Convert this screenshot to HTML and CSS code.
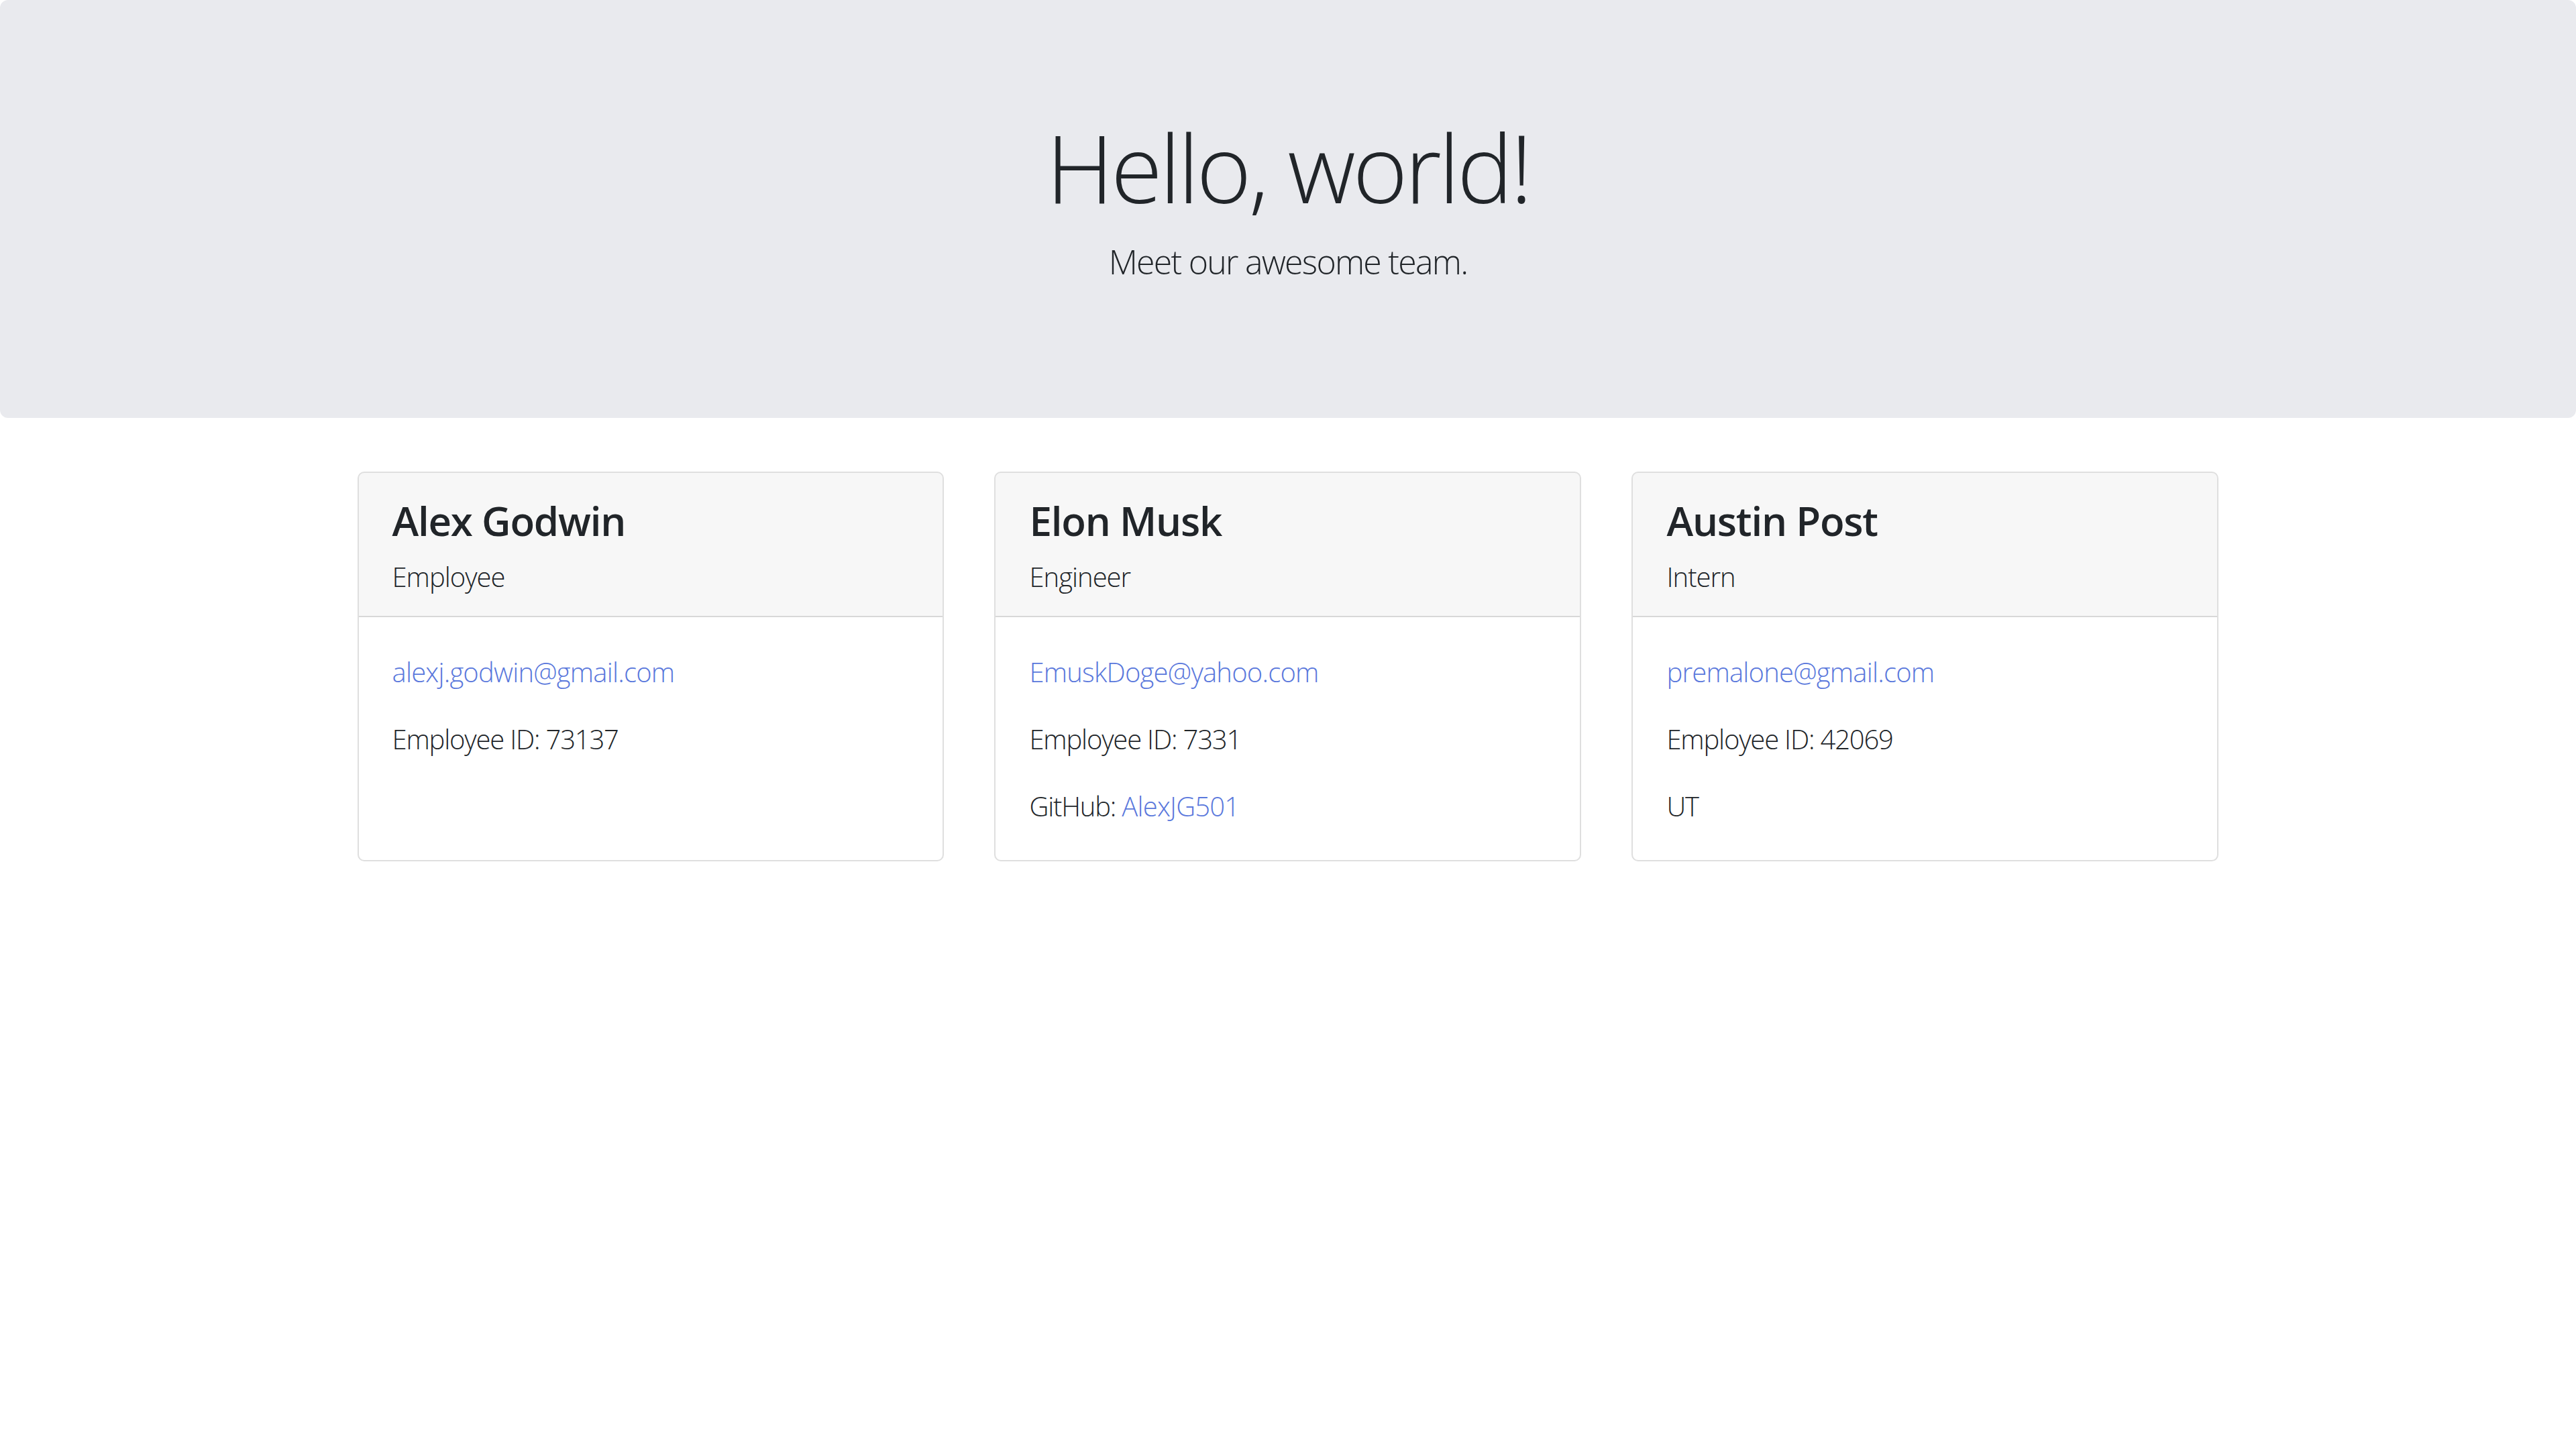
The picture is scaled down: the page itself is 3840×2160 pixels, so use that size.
FILE: index.html
```html
<!DOCTYPE html>
<html lang="en">
<head>
<meta charset="utf-8">
<title>Team</title>
<link rel="stylesheet" href="styles.css">
</head>
<body>
<div class="jumbotron">
  <h1 class="display">Hello, world!</h1>
  <p class="lead">Meet our awesome team.</p>
</div>
<div class="container">
  <div class="row">
    <div class="col">
      <div class="card">
        <div class="card-header">
          <h4 class="name">Alex Godwin</h4>
          <p class="role">Employee</p>
        </div>
        <div class="card-body">
          <p class="card-text"><a href="#">alexj.godwin@gmail.com</a></p>
          <p class="card-text">Employee ID: 73137</p>
        </div>
      </div>
    </div>
    <div class="col">
      <div class="card">
        <div class="card-header">
          <h4 class="name">Elon Musk</h4>
          <p class="role">Engineer</p>
        </div>
        <div class="card-body">
          <p class="card-text"><a href="#">EmuskDoge@yahoo.com</a></p>
          <p class="card-text">Employee ID: 7331</p>
          <p class="card-text">GitHub: <a href="#">AlexJG501</a></p>
        </div>
      </div>
    </div>
    <div class="col">
      <div class="card">
        <div class="card-header">
          <h4 class="name">Austin Post</h4>
          <p class="role">Intern</p>
        </div>
        <div class="card-body">
          <p class="card-text"><a href="#">premalone@gmail.com</a></p>
          <p class="card-text">Employee ID: 42069</p>
          <p class="card-text">UT</p>
        </div>
      </div>
    </div>
  </div>
</div>
</body>
</html>
```

FILE: styles.css
```css
html { font-size: 40px; }
body {
  margin: 0;
  font-family: "Open Sans", "Noto Sans", sans-serif;
  font-weight: 300;
  font-size: 1rem;
  line-height: 1.5;
  color: #212529;
  background: #fff;
}
.jumbotron {
  background: #e9eaee;
  border-radius: 0.3rem;
  padding: 165px 2rem 155px;
  margin-bottom: 2rem;
  text-align: center;
}
.display {
  margin: 0 0 0.5rem;
  font-size: 3.5rem;
  font-weight: 300;
  line-height: 1.2;
  letter-spacing: -0.03em;
}
.lead {
  margin: 0 0 1rem;
  font-size: 1.25rem;
  font-weight: 300;
  letter-spacing: -0.035em;
}
.container {
  width: 2850px;
  margin: 0 auto;
  padding: 0 37.5px;
  box-sizing: border-box;
}
.row {
  display: flex;
  margin: 0 -37.5px;
}
.col {
  flex: 0 0 33.3333%;
  padding: 0 37.5px;
  box-sizing: border-box;
  display: flex;
}
.card {
  flex: 1;
  display: flex;
  flex-direction: column;
  border: 2.5px solid rgba(0,0,0,0.125);
  border-radius: 0.25rem;
  background: #fff;
  overflow: hidden;
}
.card-header {
  background: rgba(0,0,0,0.03);
  border-bottom: 2.5px solid rgba(0,0,0,0.125);
  padding: 35px 1.25rem 28px;
}
.name {
  margin: 0 0 18px;
  font-size: 1.5rem;
  font-weight: 600;
  line-height: 1.2;
  letter-spacing: -0.02em;
}
.role {
  margin: 0;
  letter-spacing: -0.025em;
}
.card-body {
  flex: 1;
  padding: 52px 1.25rem 50px;
}
.card-text {
  margin: 0 0 40px;
  letter-spacing: -0.03em;
}
.card-text:last-child { margin-bottom: 0; }
a {
  color: #5a78dc;
  text-decoration: none;
  letter-spacing: -0.02em;
}
```
